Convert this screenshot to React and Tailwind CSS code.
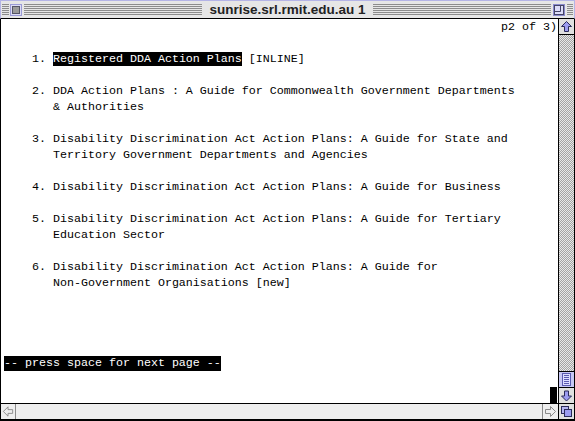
import React from "react";

function Stripes({ className = "" }) {
  return (
    <div className={`flex flex-col gap-px ${className}`}>
      {[0, 1, 2, 3, 4, 5].map((i) => (
        <div key={i} className="h-px bg-[#8c8c8c]" />
      ))}
    </div>
  );
}

function Row({ children, className = "" }) {
  return <div className={`h-4 leading-4 whitespace-pre ${className}`}>{children}</div>;
}

function UpArrow() {
  return (
    <svg width="15" height="15" viewBox="0 0 15 15">
      <polygon points="7.5,2.5 12.5,7.5 9.5,7.5 9.5,12.5 5.5,12.5 5.5,7.5 2.5,7.5" fill="#9c9cf0" stroke="#2a2a5a" strokeWidth="1" />
    </svg>
  );
}

function DownArrow() {
  return (
    <svg width="15" height="14" viewBox="0 0 15 14">
      <polygon points="7.5,12 12.5,7 9.5,7 9.5,2 5.5,2 5.5,7 2.5,7" fill="#9c9cf0" stroke="#2a2a5a" strokeWidth="1" />
    </svg>
  );
}

function LeftArrowHollow() {
  return (
    <svg width="15" height="15" viewBox="0 0 15 15">
      <polygon points="2.5,7.5 7.5,2.5 7.5,5.5 12.5,5.5 12.5,9.5 7.5,9.5 7.5,12.5" fill="none" stroke="#8a8a8a" strokeWidth="1" />
    </svg>
  );
}

function RightArrowHollow() {
  return (
    <svg width="15" height="15" viewBox="0 0 15 15">
      <polygon points="12.5,7.5 7.5,2.5 7.5,5.5 2.5,5.5 2.5,9.5 7.5,9.5 7.5,12.5" fill="none" stroke="#8a8a8a" strokeWidth="1" />
    </svg>
  );
}

export default function App() {
  const mono = "font-['Liberation_Mono',monospace] text-[11.67px]";
  return (
    <div className="w-[575px] h-[421px] flex flex-col bg-white overflow-hidden">
      {/* Title bar */}
      <div className="h-[19px] shrink-0 flex items-center bg-[#e6e6e6] border-t border-l border-r border-t-[#b4b4e6] border-l-[#b4b4e6] border-r-[#b4b4e6] border-b border-b-black pl-[1px] pr-[1px]">
        <Stripes className="w-[7px]" />
        <div className="ml-px w-[12px] h-[12px] border border-[#9a9ad6] bg-[#dcdcf4] p-px">
          <div className="w-full h-full bg-[#9a9a9a] border border-[#555566]" />
        </div>
        <Stripes className="flex-1 ml-[2px]" />
        <div className="px-[7px] font-['Liberation_Sans',sans-serif] font-bold text-[13.5px] leading-none text-[#222]">
          sunrise.srl.rmit.edu.au 1
        </div>
        <Stripes className="flex-1 mr-[2px]" />
        <svg width="12" height="12" viewBox="0 0 12 12" className="shrink-0">
          <rect x="0.5" y="0.5" width="11" height="11" fill="#c8c8f0" stroke="#8a8acc" />
          <rect x="1.5" y="1.5" width="9" height="9" fill="#dcdcf8" stroke="#444466" />
          <path d="M1.5 7.5 H7.5 V1.5" fill="none" stroke="#444466" />
        </svg>
        <Stripes className="w-[6px] ml-[2px]" />
      </div>

      {/* Main area */}
      <div className="h-[384px] shrink-0 flex border-l border-black">
        <div className={`flex-1 pl-[3px] ${mono} text-black`}>
          <Row className="text-right pr-px">p2 of 3)</Row>
          <Row> </Row>
          <Row>
            {"    1. "}
            <span className="bg-black text-white">Registered DDA Action Plans</span>
            {" [INLINE]"}
          </Row>
          <Row> </Row>
          <Row>{"    2. DDA Action Plans : A Guide for Commonwealth Government Departments"}</Row>
          <Row>{"       & Authorities"}</Row>
          <Row> </Row>
          <Row>{"    3. Disability Discrimination Act Action Plans: A Guide for State and"}</Row>
          <Row>{"       Territory Government Departments and Agencies"}</Row>
          <Row> </Row>
          <Row>{"    4. Disability Discrimination Act Action Plans: A Guide for Business"}</Row>
          <Row> </Row>
          <Row>{"    5. Disability Discrimination Act Action Plans: A Guide for Tertiary"}</Row>
          <Row>{"       Education Sector"}</Row>
          <Row> </Row>
          <Row>{"    6. Disability Discrimination Act Action Plans: A Guide for"}</Row>
          <Row>{"       Non-Government Organisations [new]"}</Row>
          <Row> </Row>
          <Row> </Row>
          <Row> </Row>
          <Row> </Row>
          <Row>
            <span className="inline-block h-[15px] leading-[15px] bg-black text-white">-- press space for next page --</span>
          </Row>
          <Row> </Row>
          <div className="h-4 flex justify-end pr-px">
            <div className="w-[7px] h-4 bg-black" />
          </div>
        </div>

        {/* Vertical scrollbar */}
        <div className="w-[17px] shrink-0 border-l border-r border-black flex flex-col">
          <div className="h-[16px] shrink-0 border-b border-black bg-[#e0e0e0] flex items-center justify-center">
            <UpArrow />
          </div>
          <div className="flex-1 bg-[repeating-conic-gradient(#a4a4a4_0%_25%,#e8e8e8_0%_50%)] bg-size-[2px_2px]" />
          <div className="h-[17px] shrink-0 border-t border-b border-black bg-[#c8c8f4] flex items-center justify-center">
            <div className="w-[9px] h-[13px] border border-[#5a5ab0] bg-[#dcdcff] flex flex-col justify-center gap-px px-px">
              {[0, 1, 2, 3, 4].map((i) => (
                <div key={i} className="h-px bg-[#5a5ab0]" />
              ))}
            </div>
          </div>
          <div className="h-[15px] shrink-0 bg-[#e0e0e0] flex items-center justify-center">
            <DownArrow />
          </div>
        </div>
      </div>

      {/* Horizontal scrollbar */}
      <div className="h-[18px] shrink-0 flex border-t border-b-2 border-l border-black bg-[#eeeeee]">
        <div className="w-[15px] shrink-0 border-r border-[#8a8a8a] flex items-center justify-center">
          <LeftArrowHollow />
        </div>
        <div className="flex-1" />
        <div className="w-[16px] shrink-0 border-l border-[#8a8a8a] flex items-center justify-center">
          <RightArrowHollow />
        </div>
        <div className="w-[17px] shrink-0 border-l border-r border-black bg-[#e0e0e0] flex items-center justify-center">
          <svg width="15" height="15" viewBox="0 0 15 15">
            <rect x="2.5" y="2.5" width="7" height="7" fill="#b4b4f0" stroke="#2a2a5a" />
            <rect x="5.5" y="5.5" width="7" height="7" fill="#9c9cf0" stroke="#2a2a5a" />
          </svg>
        </div>
      </div>
    </div>
  );
}
